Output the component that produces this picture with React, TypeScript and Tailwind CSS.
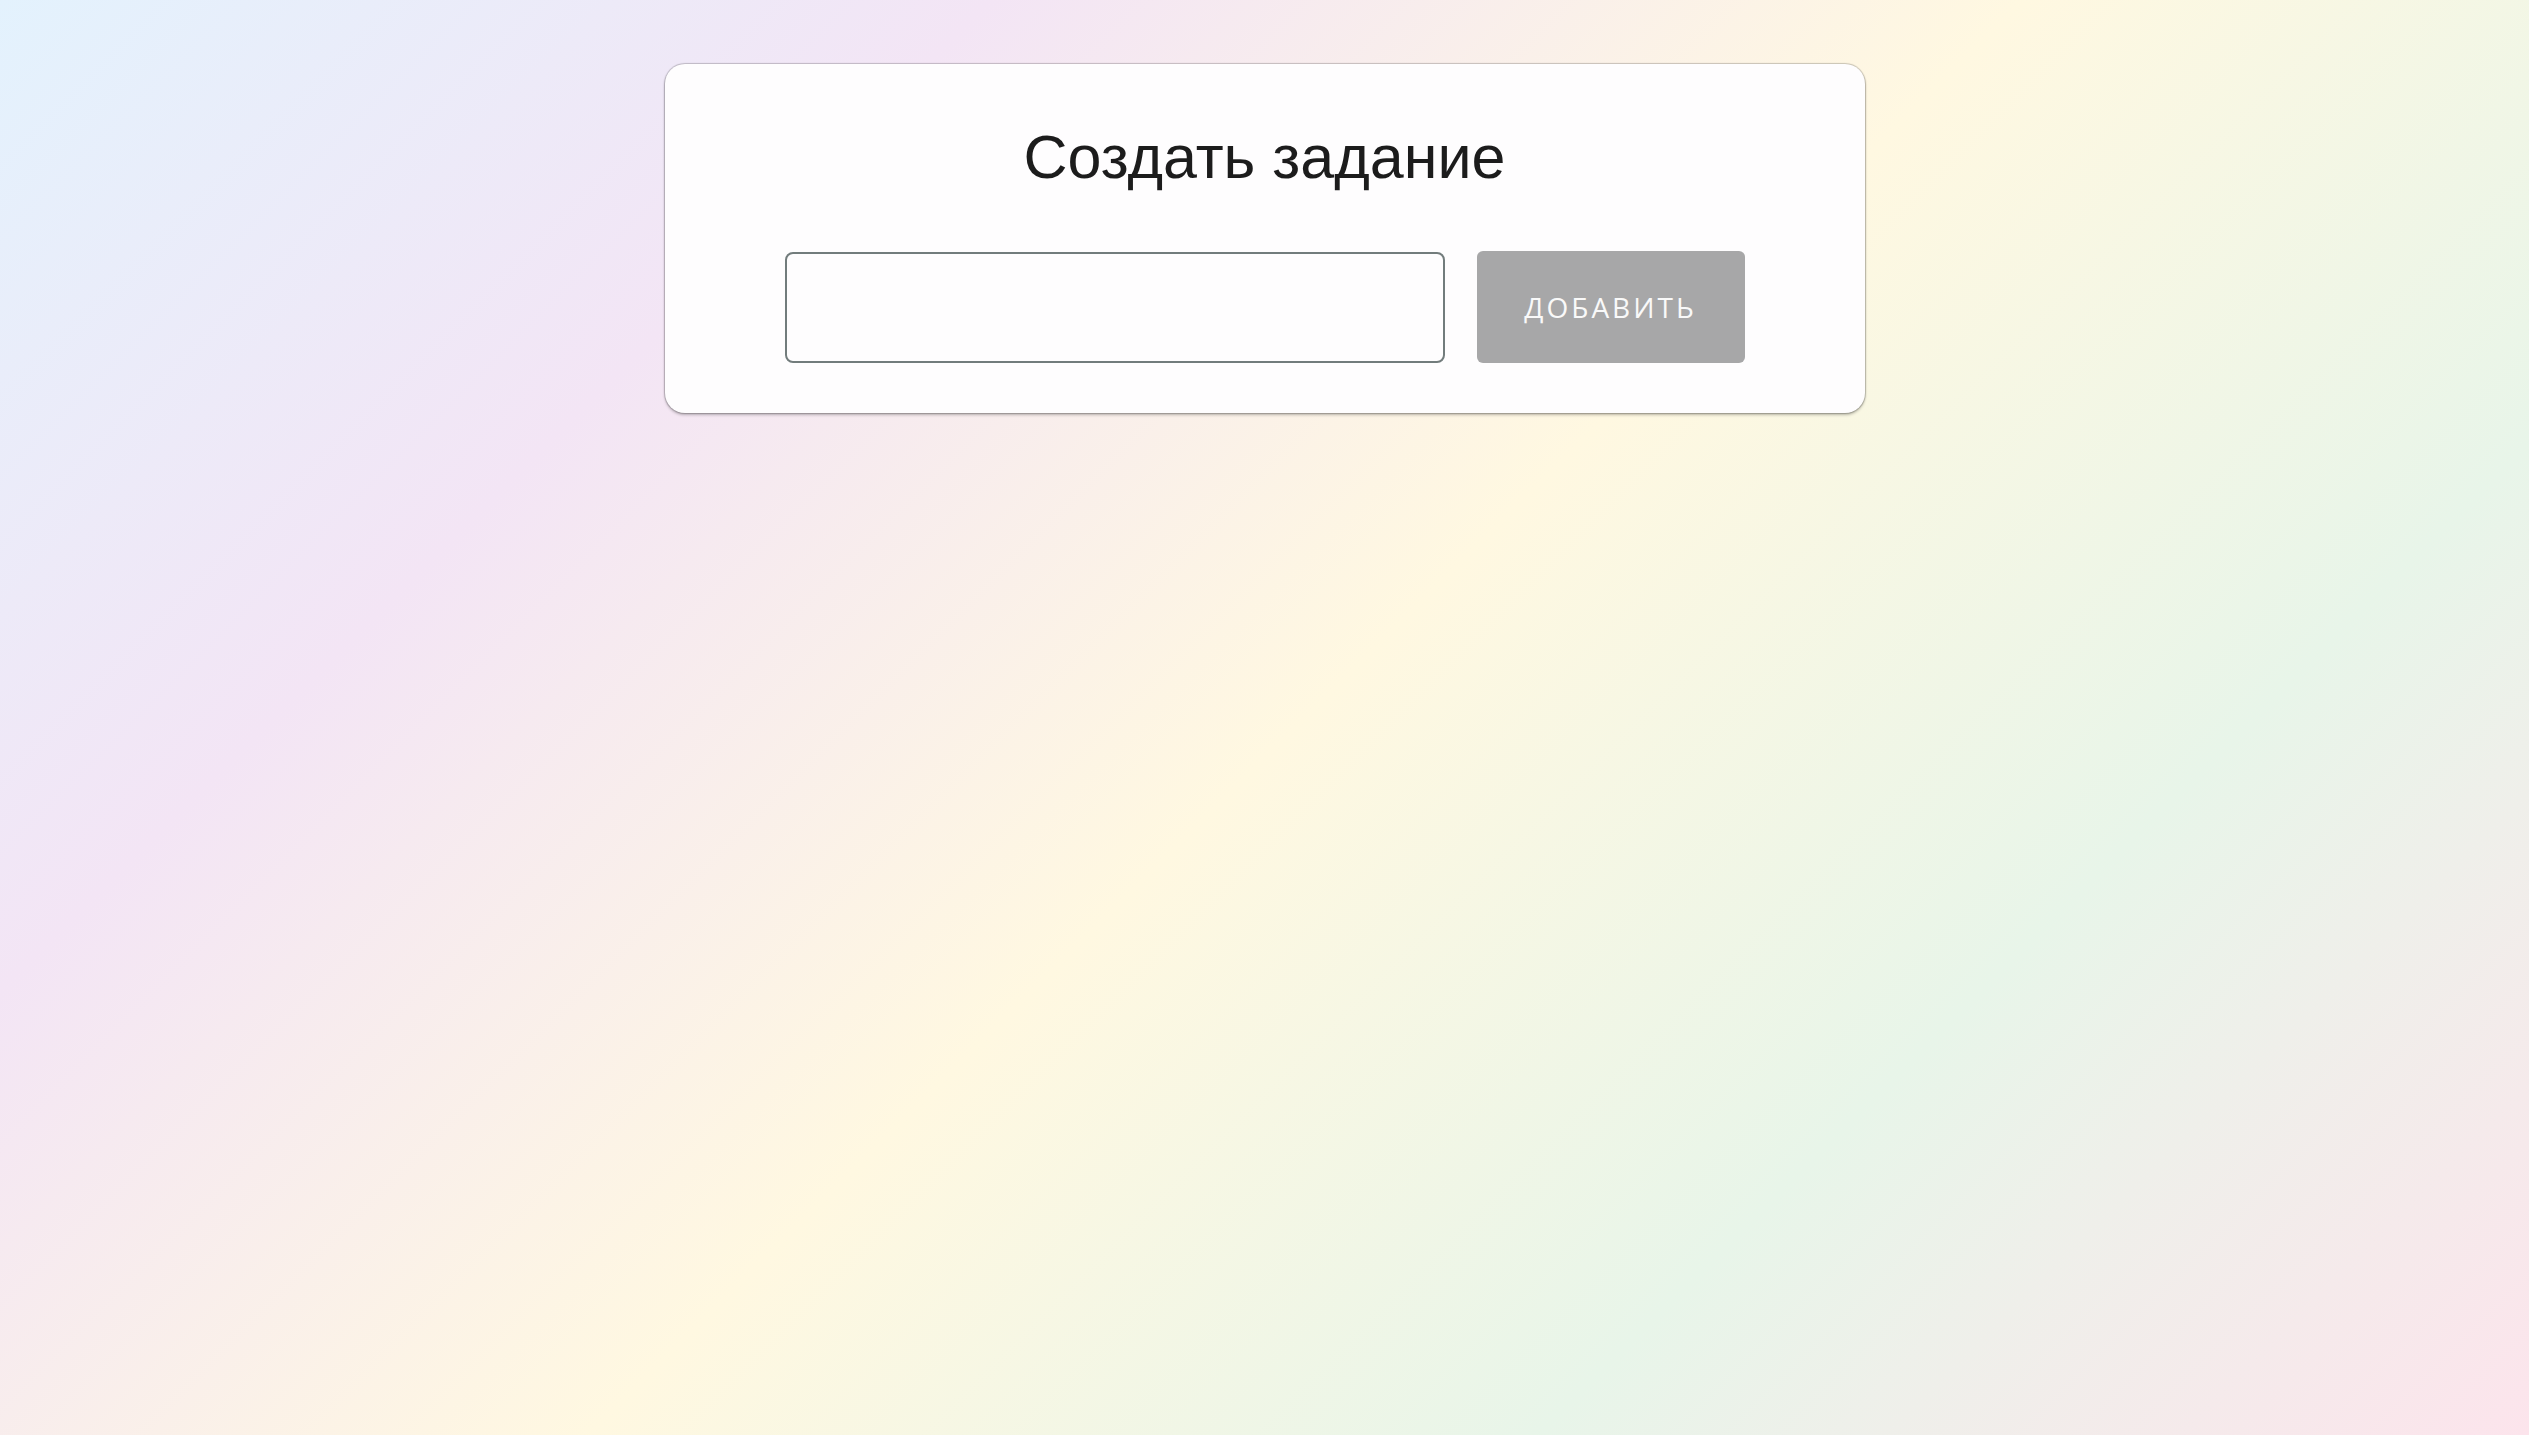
import { useState } from 'react';

export default function App() {
  const [title, setTitle] = useState('');

  return (
    <div className="min-h-screen w-full bg-[linear-gradient(135deg,#e3f2fd_0%,#f3e5f5_25%,#fff8e1_51%,#e8f5e9_75%,#fce4ec_100%)] pt-[64px]">
      <div className="mx-auto w-[1200px] rounded-[20px] bg-[#fefdfe] pt-[60px] pb-[50px] shadow-[0_0_1px_1px_rgba(0,0,0,0.2),0_2px_3px_rgba(0,0,0,0.25)]">
        <h1 className="text-center text-[61px] leading-[67px] text-[#1c1c1c] font-['Liberation_Sans',Arial,sans-serif]">
          Создать задание
        </h1>

        <div className="mt-[60px] flex items-center justify-center gap-[32px]">
          <input
            type="text"
            value={title}
            onChange={(e) => setTitle(e.target.value)}
            className="h-[111px] w-[660px] rounded-lg border-2 border-[#727c7c] bg-transparent px-4 text-[28px] outline-none"
          />
          <button
            disabled={!title}
            className="h-[112px] w-[268px] rounded-md bg-[#a7a7a8] text-[28px] uppercase tracking-[3px] text-[#f9f9f9] font-['Open_Sans','Noto_Sans',sans-serif]"
          >
            Добавить
          </button>
        </div>
      </div>
    </div>
  );
}
